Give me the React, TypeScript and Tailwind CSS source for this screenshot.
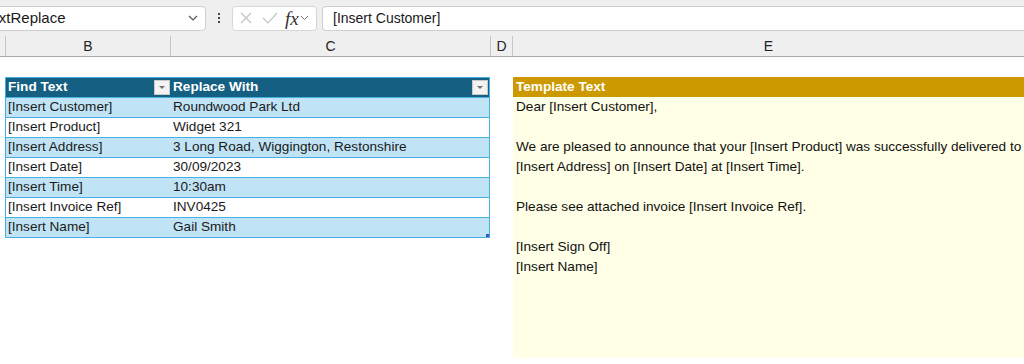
import React from "react";

const rows: [string, string][] = [
  ["[Insert Customer]", "Roundwood Park Ltd"],
  ["[Insert Product]", "Widget 321"],
  ["[Insert Address]", "3 Long Road, Wiggington, Restonshire"],
  ["[Insert Date]", "30/09/2023"],
  ["[Insert Time]", "10:30am"],
  ["[Insert Invoice Ref]", "INV0425"],
  ["[Insert Name]", "Gail Smith"],
];

const Filter = () => (
  <div className="w-[16px] h-[15px] bg-[#f3f3f3] border border-[#c9c9c9] flex items-center justify-center">
    <svg width="8" height="5" viewBox="0 0 8 5">
      <path d="M1 1 L7 1 L4 4 Z" fill="#707070" />
    </svg>
  </div>
);

export default function App() {
  const font = { fontFamily: "'Liberation Sans', Arial, sans-serif" };
  return (
    <div className="w-[1024px] h-[364px] bg-white overflow-hidden text-[#1a1a1a]" style={font}>
      {/* Toolbar */}
      <div className="h-[36px] bg-[#efefef] flex items-center">
        <div className="w-[210px] shrink-0 h-[25px] bg-white border border-[#cfcfcf] rounded-[4px] flex items-center justify-between overflow-hidden -ml-[4px]">
          <span className="text-[15px] -ml-[14px]">TextReplace</span>
          <svg width="12" height="8" viewBox="0 0 12 8" className="mr-[6px]">
            <path d="M2 2 L6 6 L10 2" stroke="#555" strokeWidth="1.2" fill="none" />
          </svg>
        </div>
        <div className="w-[26px] shrink-0 flex flex-col items-center gap-[2px]">
          <div className="w-[2px] h-[2px] bg-[#444]" />
          <div className="w-[2px] h-[2px] bg-[#444]" />
          <div className="w-[2px] h-[2px] bg-[#444]" />
        </div>
        <div className="w-[85px] shrink-0 h-[25px] bg-white border border-[#d6d6d6] rounded-[4px] flex items-center pl-[6px] gap-[9px]">
          <svg width="14" height="14" viewBox="0 0 14 14">
            <path d="M2 2 L12 12 M12 2 L2 12" stroke="#c4c4c4" strokeWidth="1.2" />
          </svg>
          <svg width="16" height="14" viewBox="0 0 16 14">
            <path d="M1 7 L6 12 L15 2" stroke="#c4c4c4" strokeWidth="1.2" fill="none" />
          </svg>
          <span className="italic text-[19px] leading-none text-[#333] -ml-[2px]" style={{ fontFamily: "'Liberation Serif', serif" }}>fx</span>
          <svg width="9" height="6" viewBox="0 0 9 6" className="-ml-[8px]">
            <path d="M1 1 L4.5 4.5 L8 1" stroke="#777" strokeWidth="1" fill="none" />
          </svg>
        </div>
        <div className="ml-[5px] flex-1 h-[25px] bg-white border border-[#cfcfcf] rounded-l-[4px] border-r-0 flex items-center pl-[10px]">
          <span className="text-[14px]">[Insert Customer]</span>
        </div>
      </div>
      {/* Column headers */}
      <div className="h-[21px] bg-[#efefef] border-b border-[#a8a8a8] flex text-[14px] text-[#222]">
        <div className="w-[6px] shrink-0 border-r border-[#c6c6c6]" />
        <div className="w-[165px] shrink-0 border-r border-[#c6c6c6] flex items-center justify-center">B</div>
        <div className="w-[320px] shrink-0 border-r border-[#c6c6c6] flex items-center justify-center">C</div>
        <div className="w-[22px] shrink-0 border-r border-[#c6c6c6] flex items-center justify-center">D</div>
        <div className="flex-1 flex items-center justify-center">E</div>
      </div>
      {/* Grid */}
      <div className="flex pt-[20px] text-[13.6px]">
        <div className="ml-[5px] w-[485px] shrink-0">
          <div className="border border-[#45b0e1]">
            <div className="h-[19px] bg-[#156082] text-white font-bold flex">
              <div className="w-[165px] flex items-center justify-between pl-[2px] pr-[1px]">
                <span>Find Text</span>
                <Filter />
              </div>
              <div className="flex-1 flex items-center justify-between pl-[2px] pr-[1px]">
                <span>Replace With</span>
                <Filter />
              </div>
            </div>
            {rows.map(([a, b], i) => (
              <div
                key={a}
                className={`h-[20px] flex border-t border-[#45b0e1] relative ${i % 2 === 0 ? "bg-[#c0e4f5]" : "bg-white"}`}
              >
                <div className="w-[165px] pl-[2px] flex items-center">{a}</div>
                <div className="flex-1 pl-[2px] flex items-center">{b}</div>
                {i === rows.length - 1 && (
                  <div className="absolute right-0 bottom-0 w-[3px] h-[3px] bg-[#3a58b8]" />
                )}
              </div>
            ))}
          </div>
        </div>
        <div className="ml-[23px] flex-1 min-w-0">
          <div className="h-[20px] bg-[#cc9900] text-white font-bold pl-[3px] flex items-center">Template Text</div>
          <div className="h-[261px] bg-[#fffee6] pl-[3px] leading-[20px] text-[#111]">
            <div>Dear [Insert Customer],</div>
            <div className="h-[20px]" />
            <div className="whitespace-nowrap">We are pleased to announce that your [Insert Product] was successfully delivered to</div>
            <div>[Insert Address] on [Insert Date] at [Insert Time].</div>
            <div className="h-[20px]" />
            <div>Please see attached invoice [Insert Invoice Ref].</div>
            <div className="h-[20px]" />
            <div>[Insert Sign Off]</div>
            <div>[Insert Name]</div>
          </div>
        </div>
      </div>
    </div>
  );
}
